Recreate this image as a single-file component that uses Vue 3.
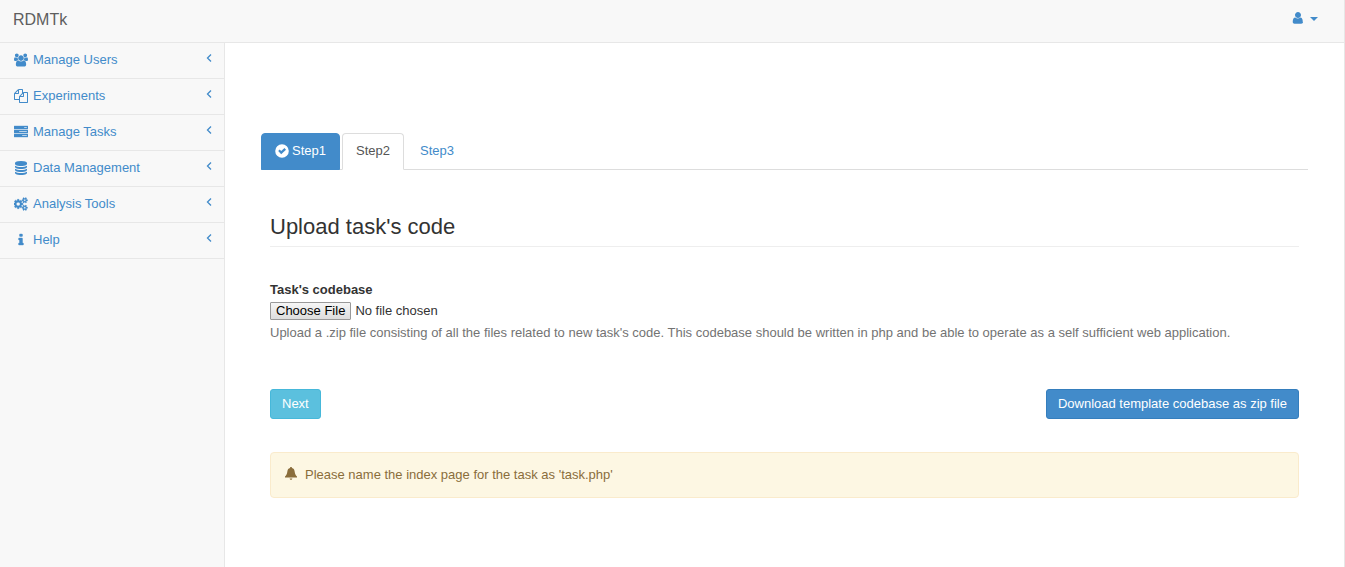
<script setup>
import { ref } from 'vue'

const cogSmall = 'v140q0 16-149 31-12 27-30 52 51 113 51 138 0 4-4 7-122 71-124 71-8 0-46-47t-52-68q-20 2-30 2t-30-2q-14 21-52 68t-46 47q-2 0-124-71-4-3-4-7 0-25 51-138-18-25-30-52-149-15-149-31v-140q0-16 149-31 13-29 30-52-51-113-51-138 0-4 4-7 4-2 35-20t59-34 30-16q8 0 46 46.500t52 67.500q20-2 30-2t30 2q51-71 92-112l6-2q4 0 124 70 4 3 4 7 0 25-51 138 17 23 30 52 149 15 149 31z'
const disc = 'q237 0 443-43t325-127v170q0 69-103 128t-280 93.500-385 34.500-385-34.500-280-93.500-103-128v-170q119 84 325 127t443 43z'
const bar = 'v256q0 26-19 45t-45 19h-1664q-26 0-45-19t-19-45v-256q0-26 19-45t45-19h1664q26 0 45 19t19 45z'

const menu = [
  {
    label: 'Manage Users',
    box: '0 0 1920 1792',
    path: 'M593 896q-162 5-265 128h-134q-82 0-138-40.500t-56-118.500q0-353 124-353 6 0 43.500 21t97.500 42.500 119 21.500q67 0 133-23-5 37-5 66 0 139 81 256zm1071 637q0 120-73 189.500t-194 69.500h-874q-121 0-194-69.500t-73-189.500q0-53 3.500-103.500t14-109 26.500-108.500 43-97.500 62-81 85.500-53.500 111.500-20q10 0 43 21.500t73 48 107 48 135 21.500 135-21.500 107-48 73-48 43-21.500q61 0 111.500 20t85.500 53.500 62 81 43 97.500 26.500 108.500 14 109 3.500 103.500zm-1024-1277q0 106-75 181t-181 75-181-75-75-181 75-181 181-75 181 75 75 181zm704 384q0 159-112.500 271.500t-271.500 112.500-271.500-112.500-112.500-271.500 112.500-271.500 271.500-112.500 271.500 112.500 112.500 271.500zm576 225q0 78-56 118.500t-138 40.500h-134q-103-123-265-128 81-117 81-256 0-29-5-66 66 23 133 23 59 0 119-21.500t97.500-42.500 43.500-21q124 0 124 353zm-128-609q0 106-75 181t-181 75-181-75-75-181 75-181 181-75 181 75 75 181z'
  },
  {
    label: 'Experiments',
    box: '0 0 1792 1792',
    path: 'M1696 384q40 0 68 28t28 68v1216q0 40-28 68t-68 28h-960q-40 0-68-28t-28-68v-288h-544q-40 0-68-28t-28-68v-672q0-40 20-88t48-76l408-408q28-28 76-48t88-20h416q40 0 68 28t28 68v328q68-40 128-40h416zm-544 213l-299 299h299v-299zm-640-384l-299 299h299v-299zm196 647l316-316v-416h-384v416q0 40-28 68t-68 28h-416v640h512v-256q0-40 20-88t48-76zm956 804v-1152h-384v416q0 40-28 68t-68 28h-416v640h896z'
  },
  {
    label: 'Manage Tasks',
    box: '0 0 1792 1792',
    heavy: true,
    path: 'M1024 1408h640v-128h-640v128zm-384-512h1024v-128h-1024v128zm640-512h384v-128h-384v128zm512 832' + bar + 'm0-512' + bar + 'm0-512' + bar
  },
  {
    label: 'Data Management',
    box: '0 0 1792 1792',
    path: 'M896 768' + disc + 'm0 768' + disc + 'm0-384' + disc + 'm0-1152q208 0 385 34.500t280 93.500 103 128v128q0 69-103 128t-280 93.500-385 34.500-385-34.500-280-93.500-103-128v-128q0-69 103-128t280-93.500 385-34.500z'
  },
  {
    label: 'Analysis Tools',
    box: '0 0 1920 1792',
    heavy: true,
    path: 'M832 896q0-106-75-181t-181-75-181 75-75 181 75 181 181 75 181-75 75-181zm768 512q0-52-38-90t-90-38-90 38-38 90q0 53 37.500 90.500t90.500 37.500 90.500-37.500 37.500-90.500zm0-1024q0-52-38-90t-90-38-90 38-38 90q0 53 37.500 90.500t90.500 37.500 90.500-37.500 37.500-90.500zm-384 421v185q0 10-7 19.500t-16 10.500l-155 24q-11 35-32 76 34 48 90 115 7 11 7 20 0 12-7 19-23 30-82.500 89.500t-78.500 59.500q-11 0-21-7l-115-90q-37 19-77 31-11 108-23 155-7 24-30 24h-186q-11 0-20-7.500t-10-17.500l-23-153q-34-10-75-31l-118 89q-7 7-20 7-11 0-21-8-144-133-144-160 0-9 7-19 10-14 41-53t47-61q-23-44-35-82l-152-24q-10-1-17-9.500t-7-19.500v-185q0-10 7-19.500t16-10.500l155-24q11-35 32-76-34-48-90-115-7-11-7-20 0-12 7-20 22-30 82-89t79-59q11 0 21 7l115 90q34-18 77-32 11-108 23-154 7-24 30-24h186q11 0 20 7.500t10 17.500l23 153q34 10 75 31l118-89q8-7 20-7 11 0 21 8 144 133 144 160 0 8-7 19-12 16-42 54t-45 60q23 48 34 82l152 23q10 2 17 10.500t7 19.500zm640 533' + cogSmall + 'm0-1024' + cogSmall
  },
  {
    label: 'Help',
    box: '0 0 1792 1792',
    heavy: true,
    path: 'M1216 1344v128q0 26-19 45t-45 19h-512q-26 0-45-19t-19-45v-128q0-26 19-45t45-19h64v-384h-64q-26 0-45-19t-19-45v-128q0-26 19-45t45-19h384q26 0 45 19t19 45v576h64q26 0 45 19t19 45zm-128-1152v192q0 26-19 45t-45 19h-256q-26 0-45-19t-19-45v-192q0-26 19-45t45-19h256q26 0 45 19t19 45z'
  }
]

const step = ref(2)
</script>

<template>
  <div class="page">
    <header class="navbar">
      <a class="brand" href="#">RDMTk</a>
      <button class="account" type="button" aria-label="Account menu">
        <svg class="icon" viewBox="0 0 1792 1792" aria-hidden="true"><path d="M1536 1399q0 109-62.500 172t-166.500 63h-854q-104 0-166.500-63t-62.500-172q0-85 8.500-160.500t31.500-152 58.500-131 94-89 134.500-34.500q131 128 313 128t313-128q76 0 134.500 34.500t94 89 58.500 131 31.500 152 8.500 160.500zm-256-887q0 159-112.500 271.500t-271.500 112.500-271.500-112.500-112.500-271.500 112.500-271.500 271.500-112.500 271.500 112.500 112.500 271.500z" /></svg>
        <svg class="caret" viewBox="0 0 8 4" aria-hidden="true"><path d="M0 0h8L4 4z" /></svg>
      </button>
    </header>

    <div class="body">
      <nav class="sidebar" aria-label="Main">
        <ul class="menu">
          <li v-for="item in menu" :key="item.label">
            <a class="menu-link" href="#">
              <svg class="icon" :class="{ heavy: item.heavy }" :viewBox="item.box" aria-hidden="true"><path :d="item.path" /></svg>
              <span class="menu-label">{{ item.label }}</span>
              <svg class="arrow" viewBox="0 0 6 8" aria-hidden="true"><path d="M5 0.500L1.500 4L5 7.500" /></svg>
            </a>
          </li>
        </ul>
      </nav>

      <main class="content">
        <ul class="tabs">
          <li>
            <a class="tab done" href="#" @click.prevent="step = 1">
              <svg class="icon" viewBox="0 0 14 14" aria-hidden="true"><path fill-rule="evenodd" d="M7 0.200a6.800 6.800 0 1 1 0 13.600a6.800 6.800 0 0 1 0-13.600zM3.200 7.100L6.200 10.200L11 5.700L9.500 4L6.200 7.100L4.700 5.600z" /></svg>
              Step1
            </a>
          </li>
          <li><a class="tab" :class="{ active: step === 2 }" href="#" @click.prevent="step = 2">Step2</a></li>
          <li><a class="tab" :class="{ active: step === 3 }" href="#" @click.prevent="step = 3">Step3</a></li>
        </ul>

        <form class="panel" @submit.prevent>
          <h1 class="title">Upload task's code</h1>
          <div class="field">
            <label for="codebase">Task's codebase</label>
            <input id="codebase" class="file" type="file" accept=".zip" />
            <p class="help">Upload a .zip file consisting of all the files related to new task's code. This codebase should be written in php and be able to operate as a self sufficient web application.</p>
          </div>
          <div class="actions">
            <button class="btn info" type="submit">Next</button>
            <a class="btn primary" href="#">Download template codebase as zip file</a>
          </div>
          <div class="alert" role="note">
            <svg class="bell" viewBox="0 0 12 13" aria-hidden="true"><path d="M6 0c0.600 0 1 0.400 1 1c1.600 0.400 2.300 1.500 2.600 3.200c0.400 2.500 0.800 4 2.400 5.300v0.900h-12v-0.900c1.600-1.300 2-2.800 2.400-5.300c0.300-1.700 1-2.800 2.600-3.200c0-0.600 0.400-1 1-1zM4.600 11.500h2.800c-0.200 0.900-0.700 1.300-1.400 1.300s-1.200-0.400-1.400-1.300z" /></svg>
            <span>Please name the index page for the task as 'task.php'</span>
          </div>
        </form>
      </main>
    </div>
  </div>
</template>

<style>
body {
  margin: 0;
  background: #f8f8f8;
}
</style>

<style scoped>
.page {
  display: flex;
  flex-direction: column;
  box-sizing: border-box;
  min-height: 100vh;
  border-right: 1px solid #e7e7e7;
  font-family: "Liberation Sans", Arial, sans-serif;
  font-size: 13px;
  line-height: 18px;
  color: #333;
}
a {
  text-decoration: none;
  color: #428bca;
}
ul {
  list-style: none;
  margin: 0;
  padding: 0;
}
.icon {
  width: 14px;
  height: 14px;
  flex: none;
  fill: currentColor;
}
.heavy {
  stroke: currentColor;
  stroke-width: 50;
}
.navbar {
  display: flex;
  justify-content: space-between;
  align-items: center;
  height: 43px;
  padding: 0 26px 2px 13px;
  box-sizing: border-box;
  border-bottom: 1px solid #e7e7e7;
  background: #f8f8f8;
}
.brand {
  font-size: 16px;
  color: #5e5e5e;
}
.account {
  display: flex;
  align-items: center;
  gap: 5px;
  padding: 0 0 4px;
  border: 0;
  background: none;
  color: #428bca;
}
.caret {
  width: 8px;
  height: 4px;
  margin-top: 2px;
  fill: currentColor;
}
.body {
  display: flex;
  flex: 1;
}
.sidebar {
  width: 224px;
  flex: none;
  border-right: 1px solid #e7e7e7;
  background: #f8f8f8;
}
.menu-link {
  display: flex;
  align-items: center;
  gap: 5px;
  padding: 8px 12px 9px 14px;
  border-bottom: 1px solid #e7e7e7;
}
.menu-label {
  flex: 1;
}
.arrow {
  width: 6px;
  height: 8px;
  margin-bottom: 4px;
  fill: none;
  stroke: currentColor;
  stroke-width: 1.300;
}
.content {
  flex: 1;
  min-width: 0;
  padding: 90px 36px 36px;
  background: #fff;
}
.tabs {
  display: flex;
  gap: 2px;
  border-bottom: 1px solid #ddd;
}
.tab {
  display: flex;
  align-items: center;
  gap: 3px;
  margin-bottom: -1px;
  padding: 8px 13px 9px;
  border: 1px solid transparent;
  border-radius: 4px 4px 0 0;
}
.tab.active {
  border-color: #ddd #ddd #fff;
  background: #fff;
  color: #555;
}
.tab.done {
  border-color: #428bca;
  background: #428bca;
  color: #fff;
}
.panel {
  padding: 44px 9px 0;
}
.title {
  margin: 0 0 34px;
  padding-bottom: 6px;
  border-bottom: 1px solid #eee;
  font-size: 22px;
  font-weight: normal;
  line-height: 26px;
}
.field label {
  display: block;
  margin-bottom: 3px;
  font-weight: bold;
}
.file {
  display: block;
  width: 100%;
  font: inherit;
}
.file::file-selector-button {
  height: 18px;
  margin: 0 4px 0 0;
  padding: 0 5px;
  border: 1px solid #999;
  border-radius: 1px;
  background: linear-gradient(#f6f6f6, #ddd);
  font: inherit;
  line-height: 16px;
  color: #000;
}
.help {
  margin: 4px 0 0;
  color: #737373;
}
.actions {
  display: flex;
  justify-content: space-between;
  margin-top: 47px;
}
.btn {
  padding: 5px 11px;
  border: 1px solid;
  border-radius: 3px;
  font: inherit;
  color: #fff;
}
.info {
  background: #5bc0de;
  border-color: #46b8da;
}
.primary {
  background: #428bca;
  border-color: #357ebd;
}
.alert {
  display: flex;
  align-items: center;
  gap: 8px;
  margin-top: 33px;
  padding: 13px 14px;
  border: 1px solid #faebcc;
  border-radius: 4px;
  background: #fdf7e3;
  color: #8a6d3b;
}
.bell {
  width: 12px;
  height: 13px;
  flex: none;
  margin-bottom: 3px;
  fill: currentColor;
}
</style>
